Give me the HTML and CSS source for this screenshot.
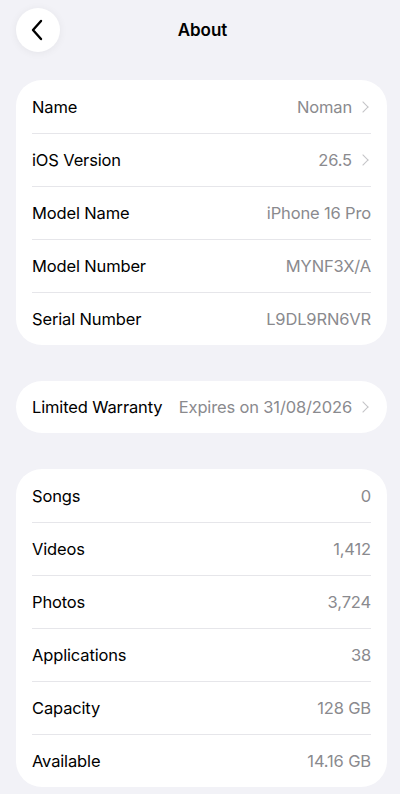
FILE: index.html
```html
<!DOCTYPE html>
<html lang="en">
<head>
    <meta charset="UTF-8">
    <title>About</title>
    <link rel="stylesheet" href="styles.css">
</head>
<body>
    <div class="nav">
        <button class="back" aria-label="Back">
            <svg width="14" height="22" viewBox="0 0 14 22"><path d="M11 2 L3 11 L11 20" fill="none" stroke="#000" stroke-width="2.4" stroke-linecap="round" stroke-linejoin="round"/></svg>
        </button>
        <h1>About</h1>
    </div>

    <div class="card">
        <div class="row"><span class="label">Name</span><span class="value">Noman</span><span class="chev"></span></div>
        <div class="row"><span class="label">iOS Version</span><span class="value">26.5</span><span class="chev"></span></div>
        <div class="row"><span class="label">Model Name</span><span class="value">iPhone 16 Pro</span></div>
        <div class="row"><span class="label">Model Number</span><span class="value">MYNF3X/A</span></div>
        <div class="row"><span class="label">Serial Number</span><span class="value">L9DL9RN6VR</span></div>
    </div>

    <div class="card single">
        <div class="row"><span class="label">Limited Warranty</span><span class="value">Expires on 31/08/2026</span><span class="chev"></span></div>
    </div>

    <div class="card">
        <div class="row"><span class="label">Songs</span><span class="value">0</span></div>
        <div class="row"><span class="label">Videos</span><span class="value">1,412</span></div>
        <div class="row"><span class="label">Photos</span><span class="value">3,724</span></div>
        <div class="row"><span class="label">Applications</span><span class="value">38</span></div>
        <div class="row"><span class="label">Capacity</span><span class="value">128 GB</span></div>
        <div class="row"><span class="label">Available</span><span class="value">14.16 GB</span></div>
    </div>
</body>
</html>
```

FILE: styles.css
```css
body {
    margin: 0;
    padding: 8px 13px 0 16px;
    background-color: #f2f2f7;
    font-family: Inter, "Noto Sans", sans-serif;
    color: #000;
    height: 794px;
    box-sizing: border-box;
    overflow: hidden;
}

.nav {
    position: relative;
    height: 44px;
    display: flex;
    align-items: center;
    justify-content: center;
    margin-bottom: 28px;
}

.back {
    position: absolute;
    left: 0;
    top: 0;
    width: 44px;
    height: 44px;
    border: none;
    border-radius: 50%;
    background-color: #fff;
    box-shadow: 0 1px 8px rgba(0, 0, 0, 0.06);
    display: flex;
    align-items: center;
    justify-content: center;
    padding: 0 3px 0 0;
}

h1 {
    margin: 0;
    font-size: 17px;
    font-weight: 600;
    margin-left: 2px;
}

.card {
    background-color: #fff;
    border-radius: 26px;
    padding: 0 16px;
    margin-bottom: 36px;
}

.single .row {
    height: 52px;
}

.row {
    height: 53px;
    display: flex;
    align-items: center;
    font-size: 16.5px;
    box-sizing: border-box;
}

.row + .row {
    border-top: 1px solid #e6e6ea;
}

.label {
    flex: 1;
    letter-spacing: -0.15px;
}

.value {
    color: #8a8a8e;
    letter-spacing: -0.15px;
}

.chev {
    width: 19px;
    height: 14px;
    position: relative;
}

.chev::after {
    content: "";
    position: absolute;
    right: 4px;
    top: 3px;
    width: 7px;
    height: 7px;
    border-top: 1.6px solid #c4c4c7;
    border-right: 1.6px solid #c4c4c7;
    transform: rotate(45deg);
}
```
